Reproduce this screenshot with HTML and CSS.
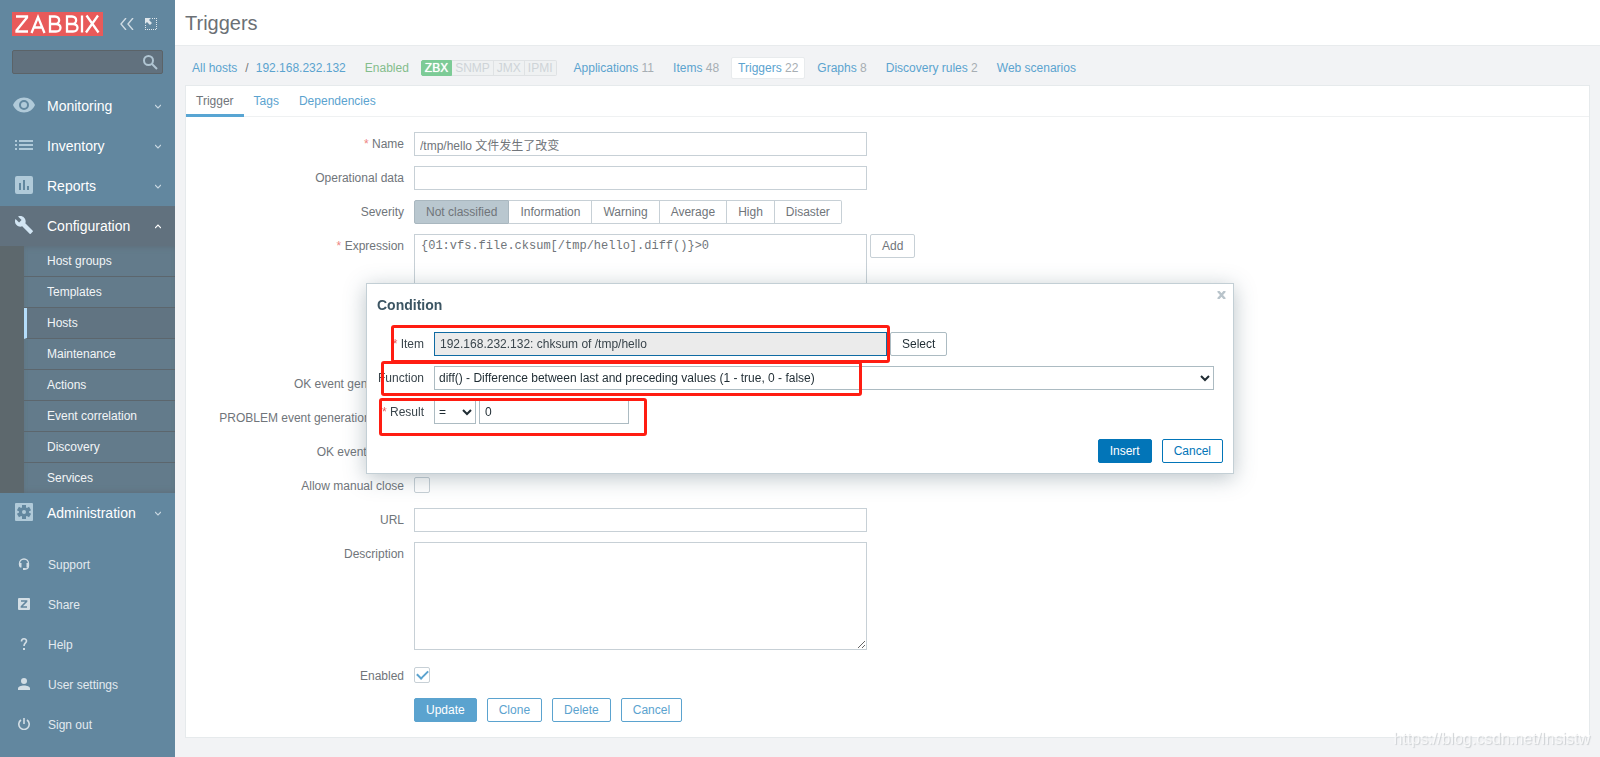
FILE: index.html
```html
<!DOCTYPE html>
<html lang="en">
<head>
<meta charset="utf-8">
<title>Configuration of triggers</title>
<link rel="stylesheet" href="styles.css">
</head>
<body>
<div class="layout">
  <aside class="sidebar">
    <div class="sidebar-head">
      <a class="logo" href="#" aria-label="Zabbix">
        <svg width="91" height="24" viewBox="0 0 91 24"><path fill="#e85a5a" d="M0 0h91v24H0z"/><g fill="none" stroke="#fff" stroke-width="2.300"><path d="M4 4.500h11v1L4.500 18.500v1H16"/><path d="M19.500 21l6.500-16 6.500 16M22 15.500h8"/><path d="M38 4.500v15h6c6 0 6-7.500 0-7.500h-6 5c5.500 0 5.500-7.500 0-7.500z"/><path d="M55 4.500v15h6c6 0 6-7.500 0-7.500h-6 5c5.500 0 5.500-7.500 0-7.500z"/><path d="M70 3.500v17"/><path d="M74.500 3.500l12 17M86 3.500l-12 17"/></g></svg>
      </a>
      <button class="icon-btn compact" aria-label="Collapse sidebar"><svg width="14" height="12" viewBox="0 0 14 12"><path d="M6 0L1 6l5 6M13 0L8 6l5 6" fill="none" stroke="#cfdbe3" stroke-width="1.400"/></svg></button>
      <button class="icon-btn" aria-label="Hide sidebar"><svg width="12" height="12" viewBox="0 0 12 12"><path d="M0 0h6L4 2l3 3-2 2-3-3-2 2z" fill="#dfe7ec"/><path d="M7 .5h5M11.500 2v10M0 11.500h11M.5 7v4" fill="none" stroke="#dfe7ec" stroke-dasharray="1 1"/></svg></button>
    </div>
    <form class="search">
      <input type="text" aria-label="Search">
      <button type="button" aria-label="Search"><svg width="15" height="15" viewBox="0 0 15 15"><g fill="none" stroke="#b0c5d2" stroke-width="2"><circle cx="5.500" cy="5.500" r="4.500"/><path d="M9 9l5 5"/></g></svg></button>
    </form>
    <nav class="menu">
      <a class="menu-item" href="#"><span class="menu-icon"><svg width="22" height="16" viewBox="1 4 22 16"><path fill="#b0cad9" d="M12 4.500C7 4.500 2.730 7.610 1 12c1.730 4.390 6 7.500 11 7.500s9.270-3.110 11-7.500c-1.730-4.390-6-7.500-11-7.500zM12 17a5 5 0 1 1 0-10 5 5 0 0 1 0 10zm0-8a3 3 0 1 0 0 6 3 3 0 0 0 0-6z"/></svg></span>Monitoring<svg class="chevron" width="6" height="5" viewBox="0 0 6 5"><path d="M0 1l3 3 3-3"/></svg></a>
      <a class="menu-item" href="#"><span class="menu-icon"><svg width="18" height="10" viewBox="0 0 18 10"><path fill="#b0cad9" d="M0 0h2v2H0zM4 0h14v2H4zM0 4h2v2H0zM4 4h14v2H4zM0 8h2v2H0zM4 8h14v2H4z"/></svg></span>Inventory<svg class="chevron" width="6" height="5" viewBox="0 0 6 5"><path d="M0 1l3 3 3-3"/></svg></a>
      <a class="menu-item" href="#"><span class="menu-icon"><svg width="18" height="18" viewBox="0 0 18 18"><path fill="#b0cad9" fill-rule="evenodd" d="M2 0h14a2 2 0 0 1 2 2v14a2 2 0 0 1-2 2H2a2 2 0 0 1-2-2V2a2 2 0 0 1 2-2zM4 7v7h2V7zM8 4v10h2V4zM12 10v4h2v-4z"/></svg></span>Reports<svg class="chevron" width="6" height="5" viewBox="0 0 6 5"><path d="M0 1l3 3 3-3"/></svg></a>
      <a class="menu-item open" href="#"><span class="menu-icon"><svg width="18" height="18" viewBox="1 1 22 22"><path fill="#d2e5f3" d="M22.700 19l-9.100-9.100c.9-2.300.4-5-1.500-6.900-2-2-5-2.400-7.400-1.300L9 6 6 9 1.600 4.700C.4 7.100.9 10.100 2.900 12.100c1.900 1.900 4.600 2.400 6.900 1.500l9.100 9.100c.4.4 1 .4 1.400 0l2.300-2.300c.5-.4.5-1.100.1-1.400z"/></svg></span>Configuration<svg class="chevron" width="6" height="5" viewBox="0 0 6 5"><path d="M0 4l3-3 3 3"/></svg></a>
      <div class="submenu">
        <a href="#">Host groups</a>
        <a href="#">Templates</a>
        <a class="current" href="#">Hosts</a>
        <a href="#">Maintenance</a>
        <a href="#">Actions</a>
        <a href="#">Event correlation</a>
        <a href="#">Discovery</a>
        <a href="#">Services</a>
      </div>
      <a class="menu-item" href="#"><span class="menu-icon"><svg width="18" height="18" viewBox="0 0 18 18"><rect width="18" height="18" rx="1" fill="#b0cad9"/><g fill="#62879f"><circle cx="9" cy="9" r="5"/><path d="M7 2h4v14H7z"/><path d="M7 2h4v14H7z" transform="rotate(60 9 9)"/><path d="M7 2h4v14H7z" transform="rotate(120 9 9)"/></g><circle cx="9" cy="9" r="2" fill="#b0cad9"/></svg></span>Administration<svg class="chevron" width="6" height="5" viewBox="0 0 6 5"><path d="M0 1l3 3 3-3"/></svg></a>
    </nav>
    <nav class="user-menu">
      <a href="#"><span class="menu-icon"><svg width="12" height="12" viewBox="0 0 12 12"><path d="M1.500 7V5.500a4.500 4.500 0 0 1 9 0V8c0 2-1 3-3.500 3" fill="none" stroke="#d3dee5" stroke-width="1.300"/><path fill="#d3dee5" d="M1 5h2.500v4.500H2L1 8zM8.500 5H11v3l-1 1.500H8.500zM5 10h2.500v2H5z"/></svg></span>Support</a>
      <a href="#"><span class="menu-icon"><svg width="12" height="12" viewBox="0 0 12 12"><rect width="12" height="12" rx="1" fill="#d3dee5"/><path d="M3 3h5.500v.5l-5 5V9H9" fill="none" stroke="#62879f" stroke-width="1.700"/></svg></span>Share</a>
      <a href="#"><span class="menu-icon"><svg width="8" height="12" viewBox="0 0 8 12"><path d="M1.500 3.500c0-3.500 5-3.500 5-.5 0 2-2.500 2-2.500 5" fill="none" stroke="#d3dee5" stroke-width="1.600"/><path fill="#d3dee5" d="M3 10h2v2H3z"/></svg></span>Help</a>
      <a href="#"><span class="menu-icon"><svg width="12" height="12" viewBox="0 0 12 12"><circle cx="6" cy="3" r="3" fill="#d3dee5"/><path d="M0 12v-1.500C0 8.700 3 7.500 6 7.500s6 1.200 6 3V12z" fill="#d3dee5"/></svg></span>User settings</a>
      <a href="#"><span class="menu-icon"><svg width="12" height="12" viewBox="0 0 12 12"><path d="M3 2a5.200 5.200 0 1 0 6 0M6 0v6" fill="none" stroke="#d3dee5" stroke-width="1.600"/></svg></span>Sign out</a>
    </nav>
  </aside>

  <main class="main">
    <header class="page-head"><h1>Triggers</h1></header>
    <nav class="host-nav">
      <a href="#">All hosts</a><span class="slash">/</span><a href="#">192.168.232.132</a>
      <span class="enabled">Enabled</span>
      <span class="status"><span class="on">ZBX</span><span>SNMP</span><span>JMX</span><span>IPMI</span></span>
      <div class="entities">
        <span class="entity"><a href="#">Applications</a> 11</span>
        <span class="entity"><a href="#">Items</a> 48</span>
        <span class="entity selected"><a href="#">Triggers</a> 22</span>
        <span class="entity"><a href="#">Graphs</a> 8</span>
        <span class="entity"><a href="#">Discovery rules</a> 2</span>
        <span class="entity"><a href="#">Web scenarios</a></span>
      </div>
    </nav>
    <section class="panel">
      <div class="tabs">
        <a class="active" href="#">Trigger</a>
        <a href="#">Tags</a>
        <a href="#">Dependencies</a>
      </div>
      <form class="form">
        <label class="required" for="name">Name</label>
        <div><input class="wide" id="name" type="text" value="/tmp/hello 文件发生了改变"></div>
        <label for="opdata">Operational data</label>
        <div><input class="wide" id="opdata" type="text"></div>
        <span class="label">Severity</span>
        <div class="segments">
          <label class="checked"><input type="radio" name="severity" checked>Not classified</label>
          <label><input type="radio" name="severity">Information</label>
          <label><input type="radio" name="severity">Warning</label>
          <label><input type="radio" name="severity">Average</label>
          <label><input type="radio" name="severity">High</label>
          <label><input type="radio" name="severity">Disaster</label>
        </div>
        <label class="required" for="expression">Expression</label>
        <div class="expression-row"><textarea class="wide code" id="expression" spellcheck="false">{01:vfs.file.cksum[/tmp/hello].diff()}&gt;0</textarea><button class="btn plain" type="button">Add</button></div>
        <span class="label">OK event generation</span><div></div>
        <span class="label">PROBLEM event generation mode</span><div></div>
        <span class="label">OK event closes</span><div></div>
        <label for="manual">Allow manual close</label>
        <div class="check-row"><input id="manual" type="checkbox"></div>
        <label for="url">URL</label>
        <div><input class="wide" id="url" type="text"></div>
        <label for="description">Description</label>
        <div class="description-row"><textarea class="wide" id="description"></textarea></div>
        <label for="enabled">Enabled</label>
        <div class="check-row"><input id="enabled" type="checkbox" checked></div>
        <div class="actions">
          <button class="btn filled" type="button">Update</button>
          <button class="btn" type="button">Clone</button>
          <button class="btn" type="button">Delete</button>
          <button class="btn" type="button">Cancel</button>
        </div>
      </form>
    </section>
  </main>
</div>

<div class="overlay">
  <div class="dialog" role="dialog" aria-labelledby="dialog-title">
    <button class="close" type="button" aria-label="Close"><svg width="9" height="8" viewBox="0 0 9 8"><path d="M1 0l7 8M8 0L1 8" stroke="#b9c4cb" stroke-width="2.400"/></svg></button>
    <h2 id="dialog-title">Condition</h2>
    <form class="condition">
      <label class="required" for="item">Item</label>
      <div class="controls"><input class="wide item" id="item" type="text" readonly value="192.168.232.132: chksum of /tmp/hello"><button class="btn plain" type="button">Select</button></div>
      <label for="function">Function</label>
      <select id="function"><option>diff() - Difference between last and preceding values (1 - true, 0 - false)</option></select>
      <label class="required" for="result">Result</label>
      <div class="controls"><select class="operator" aria-label="Operator"><option>=</option></select><input class="result" id="result" type="text" value="0"></div>
    </form>
    <div class="dialog-actions">
      <button class="btn filled" type="button">Insert</button>
      <button class="btn" type="button">Cancel</button>
    </div>
    <div class="mark mark-item"></div>
    <div class="mark mark-function"></div>
    <div class="mark mark-result"></div>
  </div>
</div>
<div class="watermark">https://blog.csdn.net/Insistw</div>
</body>
</html>
```
FILE: styles.css
```css
* { box-sizing: border-box; }
body {
  margin: 0;
  background: #f2f3f5;
  color: #70757a;
  font: 12px/14px "Liberation Sans", Arial, "Noto Sans CJK SC", sans-serif;
}
a { color: #5ba3cf; text-decoration: none; }
svg { display: block; }
button, input, select, textarea { font: inherit; color: inherit; margin: 0; }
button { cursor: pointer; }

.layout { display: flex; min-height: 100vh; }

/* Sidebar */
.sidebar { flex: 0 0 175px; min-width: 0; background: #62879f; }
.sidebar-head { display: flex; align-items: center; padding: 12px 12px 0; }
.icon-btn { border: 0; padding: 0; background: none; }
.compact { margin: 0 11px 0 17px; }
.search {
  display: flex;
  align-items: center;
  height: 24px;
  margin: 14px 12px 12px;
  padding-right: 4px;
  border: 1px solid #5b6368;
  border-radius: 2px;
  background: #61717e;
}
.search input { flex: 1; width: 0; min-width: 0; border: 0; background: none; outline: 0; color: #fff; }
.search button { border: 0; padding: 0; background: none; }
.menu-item {
  display: flex;
  align-items: center;
  height: 40px;
  padding: 0 14px 0 11px;
  color: #fff;
  font-size: 14px;
}
.menu-icon { display: flex; justify-content: center; flex: 0 0 26px; margin-right: 10px; padding-bottom: 2px; }
.chevron { margin-left: auto; fill: none; stroke: #c8d7e1; stroke-width: 1.2; }
.menu-item.open { background: #61717e; }
.open .chevron { stroke: #fff; }
.submenu {
  border-left: 24px solid #5d686d;
  background: #637b8b;
  box-shadow: inset 0 4px 6px -4px #5d6a74, inset 0 -4px 6px -4px #5d6a74;
}
.submenu a {
  display: flex;
  align-items: center;
  height: 31px;
  padding-left: 23px;
  border-bottom: 1px solid #5c666d;
  color: #f2f5f7;
}
.submenu a:last-child { height: 30px; border-bottom: 0; }
.submenu .current { padding-left: 20px; border-left: 3px solid #b5ddfa; background: #617482; }
.user-menu { padding: 12px 0; }
.user-menu a { display: flex; align-items: center; height: 40px; padding-left: 11px; color: #e3eaef; }
.user-menu .menu-icon { margin-right: 11px; }

/* Page head and host navigation */
.main { flex: 1; min-width: 0; }
.page-head { height: 46px; padding: 10px; background: #fff; border-bottom: 1px solid #e8ebed; }
h1 { margin: 0; font-size: 20px; line-height: 26px; font-weight: 400; color: #6b7075; }
.host-nav { display: flex; align-items: center; height: 39px; padding: 5px 17px 0; }
.slash { margin: 0 7px 0 8px; color: #777; }
.enabled { margin: 0 12px 0 19px; color: #84bd8c; }
.status { display: flex; margin-right: 10px; color: #ced4d8; }
.status span { padding: 0 3px; border: 1px solid #dfe2e4; border-left-width: 0; background: #eff1f2; }
.status .on { padding: 0 3px; border-color: #7ccb96; border-left-width: 1px; border-radius: 2px 0 0 2px; background: #7ccb96; color: #fff; text-shadow: 0 0 1px #fff; }
.status span:last-child { border-radius: 0 2px 2px 0; }
.entities { display: flex; gap: 5px; }
.entity { padding: 3px 6px; border: 1px solid transparent; border-radius: 2px; color: #a7aeb3; white-space: nowrap; }
.entity.selected { background: #fff; border-color: #e8ebed; }

/* Form panel */
.panel { margin: 0 10px 19px; background: #fff; border: 1px solid #e6eaec; }
.tabs { display: flex; height: 31px; border-bottom: 1px solid #eff1f2; }
.tabs a { height: 31px; padding: 8px 10px 0; }
.tabs .active { color: #70757a; border-bottom: 3px solid #58a5d3; }
.form {
  display: grid;
  grid-template-columns: 218px 1fr;
  grid-auto-rows: minmax(24px, auto);
  gap: 10px;
  padding: 15px 0;
}
.form > label, .label, .condition > label { padding-top: 5px; text-align: right; white-space: nowrap; }
.required::before { content: "* "; color: #ee8583; }
.form input[type="text"], .form textarea { padding: 0 5px; border: 1px solid #c7d0d6; background: #fff; }
input[type="text"] { height: 24px; }
input, textarea, select { display: block; border-radius: 0; outline: 0; }
.wide { width: 453px; }
.segments { display: flex; }
.segments label {
  position: relative;
  height: 24px;
  padding: 4px 11px;
  border: 1px solid #c7d0d6;
  border-left-width: 0;
}
.segments label:last-child { border-radius: 0 2px 2px 0; }
.segments .checked { border-color: #a9b7bf; border-left-width: 1px; border-radius: 2px 0 0 2px; background: #b9c7cf; }
.segments input { position: absolute; inset: 0; appearance: none; }
.expression-row { display: flex; align-items: flex-start; gap: 3px; height: 128px; }
.form .code { height: 96px; padding: 4px 6px; font-family: "Liberation Mono", "Courier New", monospace; }
.description-row { height: 112px; }
.description-row textarea { height: 108px; }
.check-row { padding-top: 3px; }
input[type="checkbox"] {
  appearance: none;
  display: grid;
  place-items: center;
  width: 16px;
  height: 16px;
  border: 1px solid #c7d0d6;
  border-radius: 2px;
  background: #fff;
}
input[type="checkbox"]:checked::before {
  content: "";
  width: 9px;
  height: 5px;
  margin-bottom: 3px;
  border: solid #5ba3cf;
  border-width: 0 0 2px 2px;
  transform: rotate(-45deg);
}
.actions { grid-column: 2; display: flex; gap: 10px; }
.btn {
  height: 24px;
  padding: 0 11px;
  border: 1px solid #5ba3cf;
  border-radius: 2px;
  background: #fff;
  color: #5ba3cf;
}
.btn.filled { background: #5ba3cf; color: #fff; }
.btn.plain { border-color: #c7d0d6; color: #70757a; }

/* Condition dialog */
.overlay { position: fixed; inset: 0; display: flex; align-items: center; justify-content: center; }
.dialog {
  position: relative;
  width: 868px;
  padding: 10px;
  border: 1px solid #c3cfd5;
  background: #fff;
  box-shadow: 0 4px 20px rgba(60, 85, 99, .35);
  color: #1f2c33;
}
.close { position: absolute; top: 3px; right: 3px; padding: 4px; border: 0; background: none; }
h2 { margin: 2px 0 18px; font-size: 14px; line-height: 18px; color: #3c5563; }
.condition { display: grid; grid-template-columns: 47px 1fr; gap: 10px; padding-right: 9px; }
.condition > label { display: flex; justify-content: flex-end; white-space: pre; color: #3a454c; }
.condition .required::before { color: #e45959; }
.controls { display: flex; gap: 3px; }
.condition input { padding: 0 5px; border: 1px solid #acbbc2; }
.condition .item { border-color: #0f6ba3; background: #ebebeb; color: #3a454c; }
.condition .result { width: 150px; }
.condition select { height: 24px; padding: 0; border: 1px solid #acbbc2; background: #fff; }
.condition .operator { width: 42px; }
.dialog .plain { border-color: #acbbc2; color: #1f2c33; }
.dialog-actions { display: flex; justify-content: flex-end; gap: 10px; margin-top: 15px; }
.dialog-actions .btn { border-color: #0275b8; color: #0275b8; }
.dialog-actions .filled { background: #0275b8; color: #fff; }

/* Highlight frames over the dialog fields */
.mark { position: absolute; border: 3px solid #ff1d12; border-radius: 3px; pointer-events: none; }
.mark-item { left: 24px; top: 41px; width: 499px; height: 38px; }
.mark-function { left: 14px; top: 77px; width: 481px; height: 35px; }
.mark-result { left: 12px; top: 114px; width: 268px; height: 38px; }

.watermark {
  position: fixed;
  right: 10px;
  bottom: 9px;
  color: rgba(255, 255, 255, .7);
  font-size: 16px;
  line-height: 18px;
  text-shadow: 1px 1px 1px #cdd0d3;
}
```
